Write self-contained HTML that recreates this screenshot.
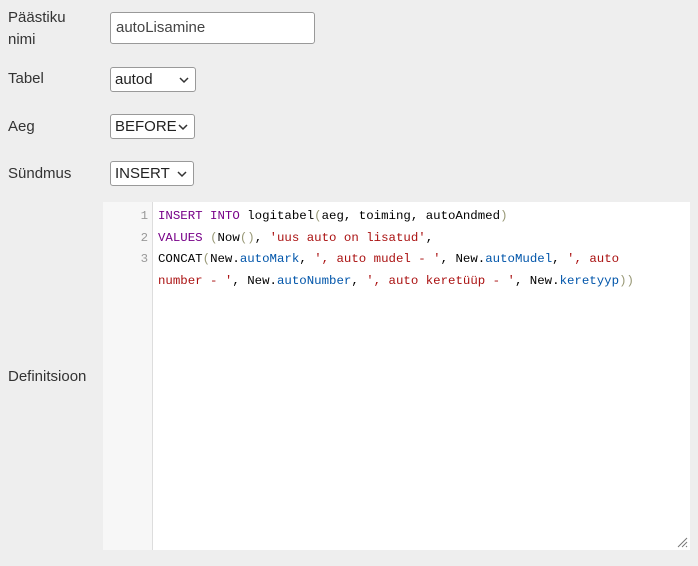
<!DOCTYPE html>
<html><head><style>
body{margin:0;background:#eeeeee;width:698px;height:566px;font-family:"Liberation Sans",sans-serif;font-size:15px;color:#333;position:relative;overflow:hidden}
.l{position:absolute;left:8px;line-height:22px}
.box{position:absolute;left:110px;background:#fff;border:1px solid #999;border-radius:3px;box-sizing:border-box;color:#222;font-size:15px}
.sel{height:25px;line-height:23px;padding-left:4px}
.sel svg{position:absolute;right:6px;top:9px}
.ed{position:absolute;left:103px;top:202px;width:587px;height:348px;background:#fff}
.g{position:absolute;left:0;top:0;width:49px;height:348px;background:#f7f7f7;border-right:1px solid #ddd}
.code{position:absolute;left:55px;top:4px;font-family:"Liberation Mono",monospace;font-size:12.4px;line-height:21.5px;color:#000;white-space:pre}
.n{position:absolute;left:0;width:45px;text-align:right;font-family:"Liberation Mono",monospace;font-size:12.4px;line-height:21.5px;color:#999;top:4px}
.k{color:#708}.s{color:#a11}.p{color:#05a}.b{color:#997}
</style></head><body>
<div class="l" style="top:7px">Päästiku<br>nimi</div>
<div class="box" style="top:12px;width:205px;height:32px;line-height:30px;padding-left:5px;color:#444">autoLisamine</div>
<div class="l" style="top:68px">Tabel</div>
<div class="box sel" style="top:67px;width:86px">autod<svg width="10" height="7"><path d="M1 1L5 5L9 1" stroke="#333" stroke-width="1.5" fill="none"/></svg></div>
<div class="l" style="top:116px">Aeg</div>
<div class="box sel" style="top:114px;width:85px">BEFORE<svg width="10" height="7"><path d="M1 1L5 5L9 1" stroke="#333" stroke-width="1.5" fill="none"/></svg></div>
<div class="l" style="top:163px">Sündmus</div>
<div class="box sel" style="top:161px;width:84px">INSERT<svg width="10" height="7"><path d="M1 1L5 5L9 1" stroke="#333" stroke-width="1.5" fill="none"/></svg></div>
<div class="l" style="top:366px">Definitsioon</div>
<div class="ed"><div class="g"></div>
<div class="n">1<br>2<br>3</div>
<div class="code"><span class="k">INSERT INTO</span> logitabel<span class="b">(</span>aeg, toiming, autoAndmed<span class="b">)</span>
<span class="k">VALUES</span> <span class="b">(</span>Now<span class="b">()</span>, <span class="s">'uus auto on lisatud'</span>,
CONCAT<span class="b">(</span>New.<span class="p">autoMark</span>, <span class="s">', auto mudel - '</span>, New.<span class="p">autoMudel</span>, <span class="s">', auto</span>
<span class="s">number - '</span>, New.<span class="p">autoNumber</span>, <span class="s">', auto keretüüp - '</span>, New.<span class="p">keretyyp</span><span class="b">))</span></div>
<svg style="position:absolute;right:2px;bottom:2px" width="12" height="12"><path d="M11 2L2 11M11 6L6 11M11 10L10 11" stroke="#777" stroke-width="1"/></svg>
</div>
</body></html>
